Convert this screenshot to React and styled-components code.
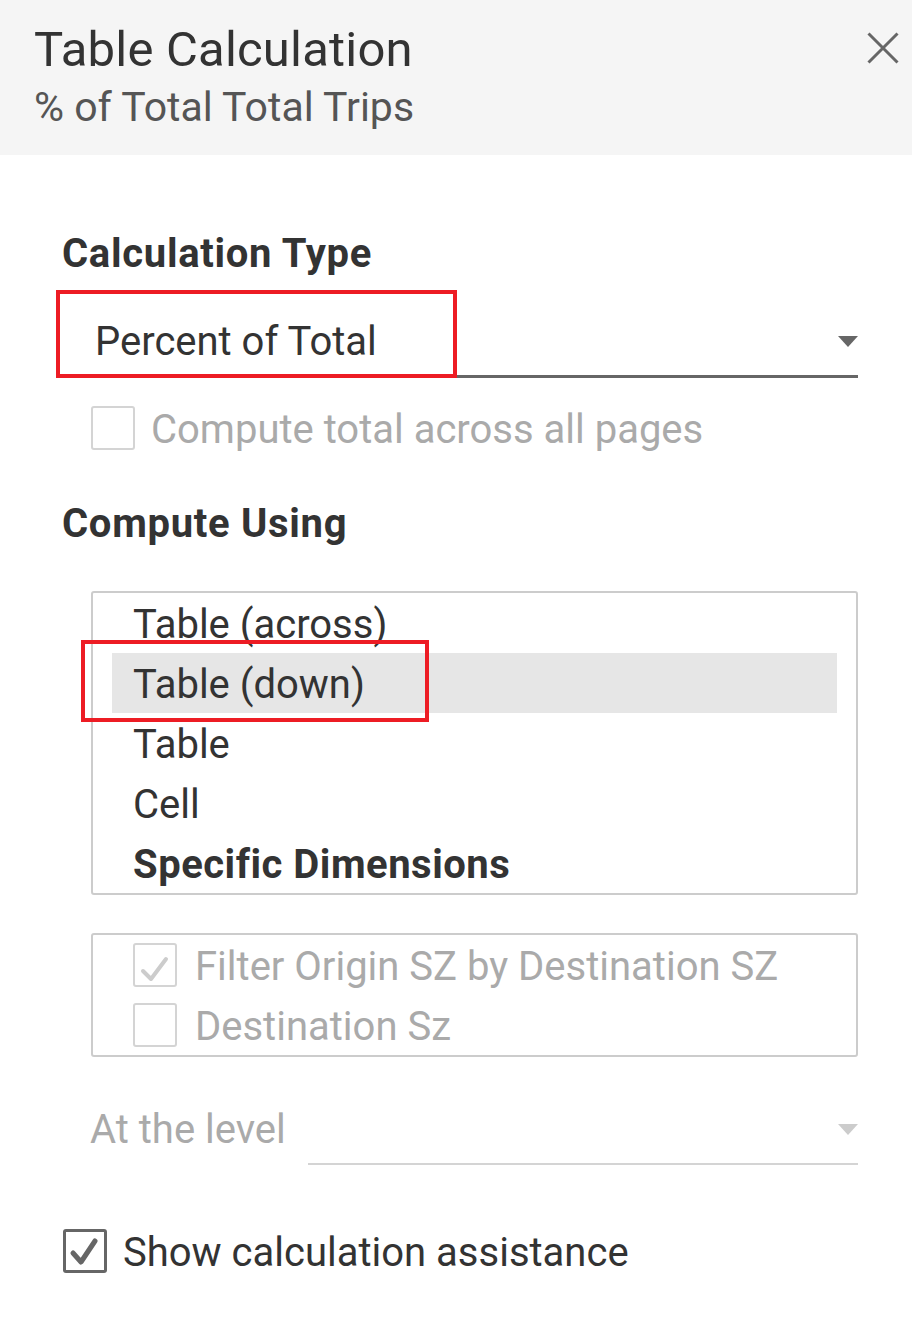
import React from "react";
import styled, { createGlobalStyle } from "styled-components";

const GlobalStyle = createGlobalStyle`
  html, body {
    margin: 0;
    padding: 0;
    background: #ffffff;
  }
  body {
    font-family: Roboto, "Liberation Sans", sans-serif;
    color: #333333;
  }
`;

const items = [
  { label: "Table (across)" },
  { label: "Table (down)", selected: true },
  { label: "Table" },
  { label: "Cell" },
  { label: "Specific Dimensions", bold: true },
];

const dims = [
  { label: "Filter Origin SZ by Destination SZ", checked: true },
  { label: "Destination Sz", checked: false },
];

function Check({ tone, checked }) {
  return (
    <Box tone={tone}>
      {checked && (
        <svg width="44" height="44" viewBox="0 0 44 44">
          <polyline
            points={tone === "dark" ? "10,24 18,33 32,12" : "10,28 18,36 33,16"}
            fill="none"
            stroke={tone === "dark" ? "#666666" : "#cccccc"}
            strokeWidth={tone === "dark" ? 5 : 4}
            strokeLinecap="round"
            strokeLinejoin="round"
          />
        </svg>
      )}
    </Box>
  );
}

function App() {
  return (
    <>
      <GlobalStyle />
      <Panel>
        <Header>
          <Titles>
            <Title>Table Calculation</Title>
            <Subtitle>% of Total Total Trips</Subtitle>
          </Titles>
          <Close aria-label="close">
            <svg width="32" height="32" viewBox="0 0 32 32">
              <path d="M1.5 1.5 L30.5 30.5 M30.5 1.5 L1.5 30.5" stroke="#666666" strokeWidth="3" fill="none" />
            </svg>
          </Close>
        </Header>

        <Body>
          <Heading>Calculation Type</Heading>
          <Select>
            <SelectText>Percent of Total</SelectText>
            <Arrow />
            <Highlight style={{ left: -6, top: 0, width: 401, height: 88 }} />
          </Select>

          <CheckRow indent={29} margin={28} gap={16}>
            <Check tone="light" />
            <CheckLabel disabled>Compute total across all pages</CheckLabel>
          </CheckRow>

          <Heading margin={48}>Compute Using</Heading>
          <ListBox>
            {items.map((it) => (
              <Item key={it.label} selected={it.selected} bold={it.bold}>
                {it.label}
                {it.selected && (
                  <Highlight style={{ left: -31, top: -13, width: 348, height: 82 }} />
                )}
              </Item>
            ))}
          </ListBox>

          <DimBox>
            {dims.map((d) => (
              <DimRow key={d.label}>
                <Check tone="light" checked={d.checked} />
                <CheckLabel disabled>{d.label}</CheckLabel>
              </DimRow>
            ))}
          </DimBox>

          <LevelRow>
            <LevelLabel>At the level</LevelLabel>
            <LevelSelect>
              <Arrow disabled />
            </LevelSelect>
          </LevelRow>

          <CheckRow indent={1} margin={64} gap={16}>
            <Check tone="dark" checked />
            <CheckLabel>Show calculation assistance</CheckLabel>
          </CheckRow>
        </Body>
      </Panel>
    </>
  );
}

export default App;

const Panel = styled.div`
  width: 912px;
  min-height: 1335px;
  background: #ffffff;
`;

const Header = styled.div`
  height: 155px;
  background: #f5f5f5;
  display: flex;
  justify-content: space-between;
  align-items: flex-start;
  padding: 0 13px 0 34px;
  box-sizing: border-box;
`;

const Titles = styled.div`
  display: flex;
  flex-direction: column;
  padding-top: 21px;
`;

const Title = styled.div`
  font-size: 49px;
  line-height: 57px;
  letter-spacing: 0.2px;
  color: #333333;
`;

const Subtitle = styled.div`
  font-size: 41px;
  line-height: 48px;
  margin-top: 5px;
  color: #555555;
`;

const Close = styled.div`
  margin-top: 32px;
  width: 32px;
  height: 32px;
  svg {
    display: block;
  }
`;

const Body = styled.div`
  padding: 0 54px 0 62px;
  display: flex;
  flex-direction: column;
`;

const Heading = styled.div`
  font-size: 40px;
  line-height: 48px;
  font-weight: 700;
  letter-spacing: 0.7px;
  color: #333333;
  padding-top: 2px;
  margin-top: ${(p) => p.margin || 73}px;
`;

const Select = styled.div`
  position: relative;
  margin-top: 12px;
  height: 88px;
  box-sizing: border-box;
  border-bottom: 3px solid #666666;
  display: flex;
  align-items: flex-start;
  justify-content: space-between;
  padding: 28px 0 0 33px;
`;

const SelectText = styled.div`
  font-size: 40px;
  line-height: 48px;
  color: #333333;
`;

const Arrow = styled.div`
  align-self: flex-start;
  margin-top: ${(p) => (p.disabled ? 24 : 18)}px;
  width: 0;
  height: 0;
  border-left: 10px solid transparent;
  border-right: 10px solid transparent;
  border-top: 11px solid ${(p) => (p.disabled ? "#cccccc" : "#666666")};
`;

const Highlight = styled.div`
  position: absolute;
  box-sizing: border-box;
  border: 4px solid #ed1c24;
  pointer-events: none;
`;

const CheckRow = styled.div`
  display: flex;
  align-items: center;
  gap: ${(p) => p.gap || 18}px;
  margin-top: ${(p) => p.margin}px;
  margin-left: ${(p) => p.indent}px;
  height: 44px;
`;

const Box = styled.div`
  width: 44px;
  height: 44px;
  flex: none;
  box-sizing: border-box;
  border: ${(p) => (p.tone === "dark" ? "3px solid #666666" : "2px solid #d4d4d4")};
  border-radius: 3px;
  background: #ffffff;
  position: relative;
  svg {
    position: absolute;
    left: ${(p) => (p.tone === "dark" ? -3 : -2)}px;
    top: ${(p) => (p.tone === "dark" ? -3 : -2)}px;
  }
`;

const CheckLabel = styled.div`
  font-size: 40px;
  line-height: 44px;
  padding-top: 3px;
  white-space: nowrap;
  color: ${(p) => (p.disabled ? "#aaaaaa" : "#333333")};
`;

const ListBox = styled.div`
  margin: 43px 0 0 29px;
  border: 2px solid #cccccc;
  border-radius: 3px;
  padding: 0 19px;
  display: flex;
  flex-direction: column;
`;

const Item = styled.div`
  position: relative;
  box-sizing: border-box;
  height: 60px;
  padding: 3px 0 0 21px;
  line-height: 57px;
  font-size: 40px;
  font-weight: ${(p) => (p.bold ? 700 : 400)};
  letter-spacing: ${(p) => (p.bold ? "0.5px" : "0")};
  background: ${(p) => (p.selected ? "#e6e6e6" : "transparent")};
  color: #333333;
`;

const DimBox = styled.div`
  margin: 38px 0 0 29px;
  border: 2px solid #cccccc;
  border-radius: 3px;
  display: flex;
  flex-direction: column;
`;

const DimRow = styled.div`
  height: 60px;
  display: flex;
  align-items: center;
  gap: 18px;
  padding-left: 40px;
`;

const LevelRow = styled.div`
  display: flex;
  align-items: flex-end;
  margin: 43px 0 0 28px;
  gap: 22px;
`;

const LevelLabel = styled.div`
  font-size: 40px;
  line-height: 48px;
  margin-bottom: 11px;
  color: #aaaaaa;
  white-space: nowrap;
`;

const LevelSelect = styled.div`
  flex: 1;
  height: 65px;
  box-sizing: border-box;
  border-bottom: 2px solid #d4d4d4;
  display: flex;
  justify-content: flex-end;
`;
